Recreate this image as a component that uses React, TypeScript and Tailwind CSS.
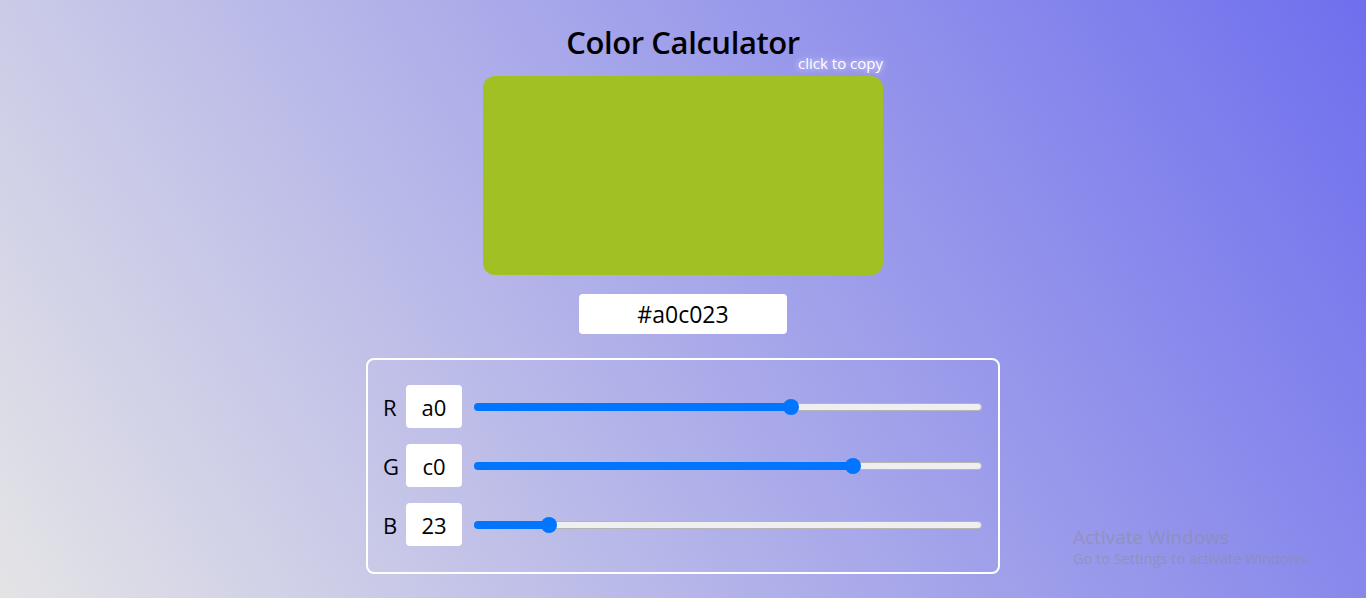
import React, { useState } from "react";

const font = { fontFamily: '"Open Sans", "Noto Sans", sans-serif' };

function toHex(n: number) {
	return n.toString(16).padStart(2, "0");
}

function Slider({ value }: { value: number }) {
	// thumb center: 7.5px inset at both ends of the track
	const pct = value / 255;
	const center = 7.5 + pct * (508 - 15);
	return (
		<div className="relative flex-1 h-[16px] flex items-center">
			<div className="w-full h-[8px] rounded-full bg-[#efefef] border border-[#b5b5b5]" />
			<div
				className="absolute left-0 h-[8px] rounded-l-full bg-[#0075ff]"
				style={{ width: center }}
			/>
			<div
				className="absolute top-0 w-[16px] h-[16px] rounded-full bg-[#0075ff]"
				style={{ left: center - 8 }}
			/>
		</div>
	);
}

function Row({ label, value }: { label: string; value: number }) {
	return (
		<div className="flex items-center">
			<span className="w-[23px] text-[22px] text-black leading-none">{label}</span>
			<input
				readOnly
				value={toHex(value)}
				className="w-[56px] h-[43px] rounded-[4px] bg-white text-center text-[22px] text-black outline-none"
				style={font}
			/>
			<div className="ml-[12px] flex-1 flex">
				<Slider value={value} />
			</div>
		</div>
	);
}

export default function App() {
	const [rgb] = useState({ r: 0xa0, g: 0xc0, b: 0x23 });
	const hex = "#" + toHex(rgb.r) + toHex(rgb.g) + toHex(rgb.b);

	return (
		<div
			className="relative w-full h-[598px] overflow-hidden bg-[linear-gradient(58deg,#e4e4e6,#6f6fee)] flex flex-col items-center"
			style={font}
		>
			<h1 className="pt-[24px] text-[31px] leading-[36px] font-semibold text-black tracking-[-0.4px]">
				Color Calculator
			</h1>
			<div className="relative mt-[16px]">
				<span className="absolute right-0 -top-[23px] text-[15px] leading-[20px] text-white [text-shadow:0_0_6px_rgba(255,255,255,0.9)]">
					click to copy
				</span>
				<div className="w-[400px] h-[199px] rounded-[12px]" style={{ backgroundColor: hex }} />
			</div>
			<input
				readOnly
				value={hex}
				className="mt-[19px] w-[208px] h-[40px] rounded-[4px] bg-white text-center text-[23px] text-black outline-none"
				style={font}
			/>
			<div className="mt-[24px] w-[634px] rounded-[8px] border-2 border-white pl-[15px] pr-[16px] pt-[25px] pb-[26px] flex flex-col gap-[16px]">
				<Row label="R" value={rgb.r} />
				<Row label="G" value={rgb.g} />
				<Row label="B" value={rgb.b} />
			</div>
			<div className="absolute left-[1073px] top-[524px] text-[rgba(140,140,150,0.55)]">
				<p className="text-[19px] leading-[26px]">Activate Windows</p>
				<p className="text-[14.5px] leading-[18px]">Go to Settings to activate Windows.</p>
			</div>
		</div>
	);
}
